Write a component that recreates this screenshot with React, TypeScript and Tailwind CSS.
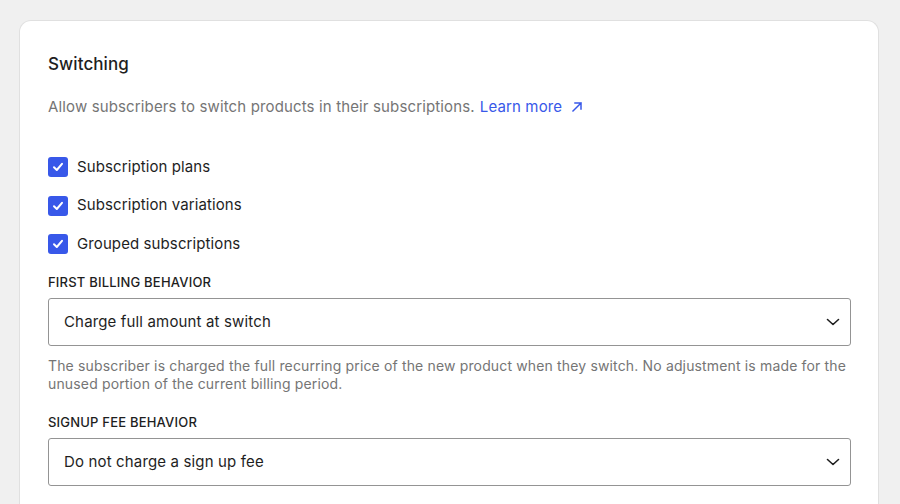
import React from "react";

const Check = () => (
  <span className="flex h-5 w-5 items-center justify-center rounded-[3px] bg-[#3858e9]">
    <svg width="14" height="14" viewBox="0 0 14 14" fill="none">
      <path d="M3 7.3 L5.8 10 L11 3.8" stroke="white" strokeWidth="2" strokeLinecap="round" strokeLinejoin="round" />
    </svg>
  </span>
);

const Chevron = () => (
  <svg width="14" height="10" viewBox="0 0 14 10" fill="none">
    <path d="M1.5 2.5 L7 7.5 L12.5 2.5" stroke="#1e1e1e" strokeWidth="1.6" strokeLinecap="round" strokeLinejoin="round" />
  </svg>
);

const Select = ({ value }: { value: string }) => (
  <div className="flex h-12 items-center justify-between rounded-[3px] border border-[#949494] pl-[15px] pr-[10px] text-[15px] tracking-[0.15px] text-[#1e1e1e]">
    <span>{value}</span>
    <Chevron />
  </div>
);

export default function App() {
  const items = ["Subscription plans", "Subscription variations", "Grouped subscriptions"];
  return (
    <div
      className="min-h-[504px] bg-[#f0f0f0] pl-[19px] pr-[21px] pt-[20px]"
      style={{ fontFamily: "Inter, 'Noto Sans', sans-serif" }}
    >
      <div className="rounded-t-xl border border-b-0 border-[#e0e0e0] bg-white pl-[28px] pr-[27px] pb-[20px] pt-[31px]">
        <h2 className="text-[17px] font-medium leading-6 tracking-[0.1px] text-[#1e1e1e]">Switching</h2>
        <p className="mt-[21px] flex items-center text-[15px] leading-5 tracking-[0.14px] text-[#757575]">
          Allow subscribers to switch products in their subscriptions.
          <a className="ml-[5px] flex items-center text-[#3858e9]">
            Learn more
            <svg className="ml-[9px]" width="12" height="12" viewBox="0 0 12 12" fill="none">
              <path d="M2 10 L10 2 M4 2 H10 V8" stroke="#3858e9" strokeWidth="1.5" strokeLinecap="square" />
            </svg>
          </a>
        </p>
        <div className="mt-[40px] flex flex-col gap-[18.5px]">
          {items.map((t) => (
            <label key={t} className="flex h-5 items-center gap-[9px] text-[15px] tracking-[0.1px] text-[#1e1e1e]">
              <Check />
              <span>{t}</span>
            </label>
          ))}
        </div>
        <div className="mt-[20px] text-[13px] font-medium uppercase leading-4 tracking-[0.2px] text-[#1e1e1e]">
          First billing behavior
        </div>
        <div className="mt-2">
          <Select value="Charge full amount at switch" />
        </div>
        <p className="mt-[11px] text-[14px] leading-[18px] tracking-[0.15px] text-[#757575]">
          The subscriber is charged the full recurring price of the new product when they switch. No adjustment is made for the
          unused portion of the current billing period.
        </p>
        <div className="mt-[21px] text-[13px] font-medium uppercase leading-4 tracking-[0.2px] text-[#1e1e1e]">
          Signup fee behavior
        </div>
        <div className="mt-2">
          <Select value="Do not charge a sign up fee" />
        </div>
      </div>
    </div>
  );
}
